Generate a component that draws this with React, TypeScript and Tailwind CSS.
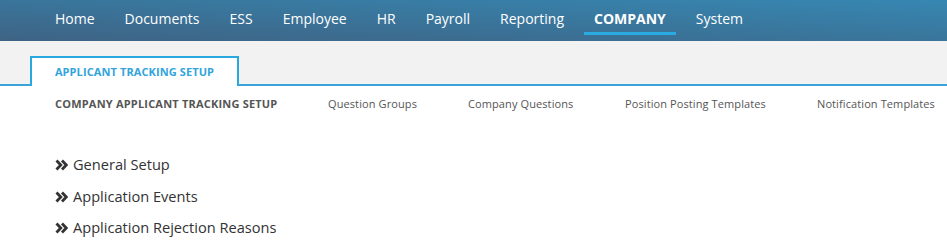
import React from "react";

const navItems = ["Home", "Documents", "ESS", "Employee", "HR", "Payroll", "Reporting", "COMPANY", "System"];
const subLinks = ["Question Groups", "Company Questions", "Position Posting Templates", "Notification Templates"];
const sections = ["General Setup", "Application Events", "Application Rejection Reasons"];

function DoubleChevron() {
  return (
    <svg width="13" height="12" viewBox="0 0 13 12" className="shrink-0">
      <path d="M1.5 1.5 L5.8 6 L1.5 10.5" fill="none" stroke="#333" strokeWidth="2.8" />
      <path d="M7 1.5 L11.3 6 L7 10.5" fill="none" stroke="#333" strokeWidth="2.8" />
    </svg>
  );
}

export default function App() {
  return (
    <div className="w-[947px] h-[240px] bg-white overflow-hidden font-['Open_Sans',sans-serif]">
      {/* top nav */}
      <div className="h-[41px] bg-[linear-gradient(to_top_right,#3e6384,#3687b2)] flex items-start pl-[45px] gap-[10px]">
        {navItems.map((item) => {
          const active = item === "COMPANY";
          return (
            <div
              key={item}
              className={
                "h-[35px] px-[10px] pt-[9px] text-[14px] leading-[20px] text-white " +
                (active ? "font-bold border-b-[3px] border-[#29abe2]" : "")
              }
            >
              {item}
            </div>
          );
        })}
      </div>

      {/* tab band */}
      <div className="h-[45px] bg-[#f2f2f2] border-b-2 border-[#3aa3d8] flex items-end pl-[30px]">
        <div className="h-[30px] w-[209px] -mb-[2px] bg-white border-2 border-b-0 border-[#29a8e0] flex items-center justify-center text-[11px] font-bold text-[#31a4dc] tracking-[0.1px]">
          APPLICANT TRACKING SETUP
        </div>
      </div>

      {/* sub nav */}
      <div className="flex items-center h-[36px] pl-[55px] text-[11px] tracking-[0.1px] text-[#555]">
        <div className="font-bold tracking-[0.2px] w-[273px]">COMPANY APPLICANT TRACKING SETUP</div>
        <div className="w-[140px]">{subLinks[0]}</div>
        <div className="w-[157px]">{subLinks[1]}</div>
        <div className="w-[192px]">{subLinks[2]}</div>
        <div>{subLinks[3]}</div>
      </div>

      {/* sections */}
      <div className="pl-[55px] pt-[32px] flex flex-col gap-[9.5px]">
        {sections.map((s) => (
          <div key={s} className="flex items-center gap-[5px] h-[22px] text-[14.6px] text-[#333]">
            <DoubleChevron />
            <span>{s}</span>
          </div>
        ))}
      </div>
    </div>
  );
}
